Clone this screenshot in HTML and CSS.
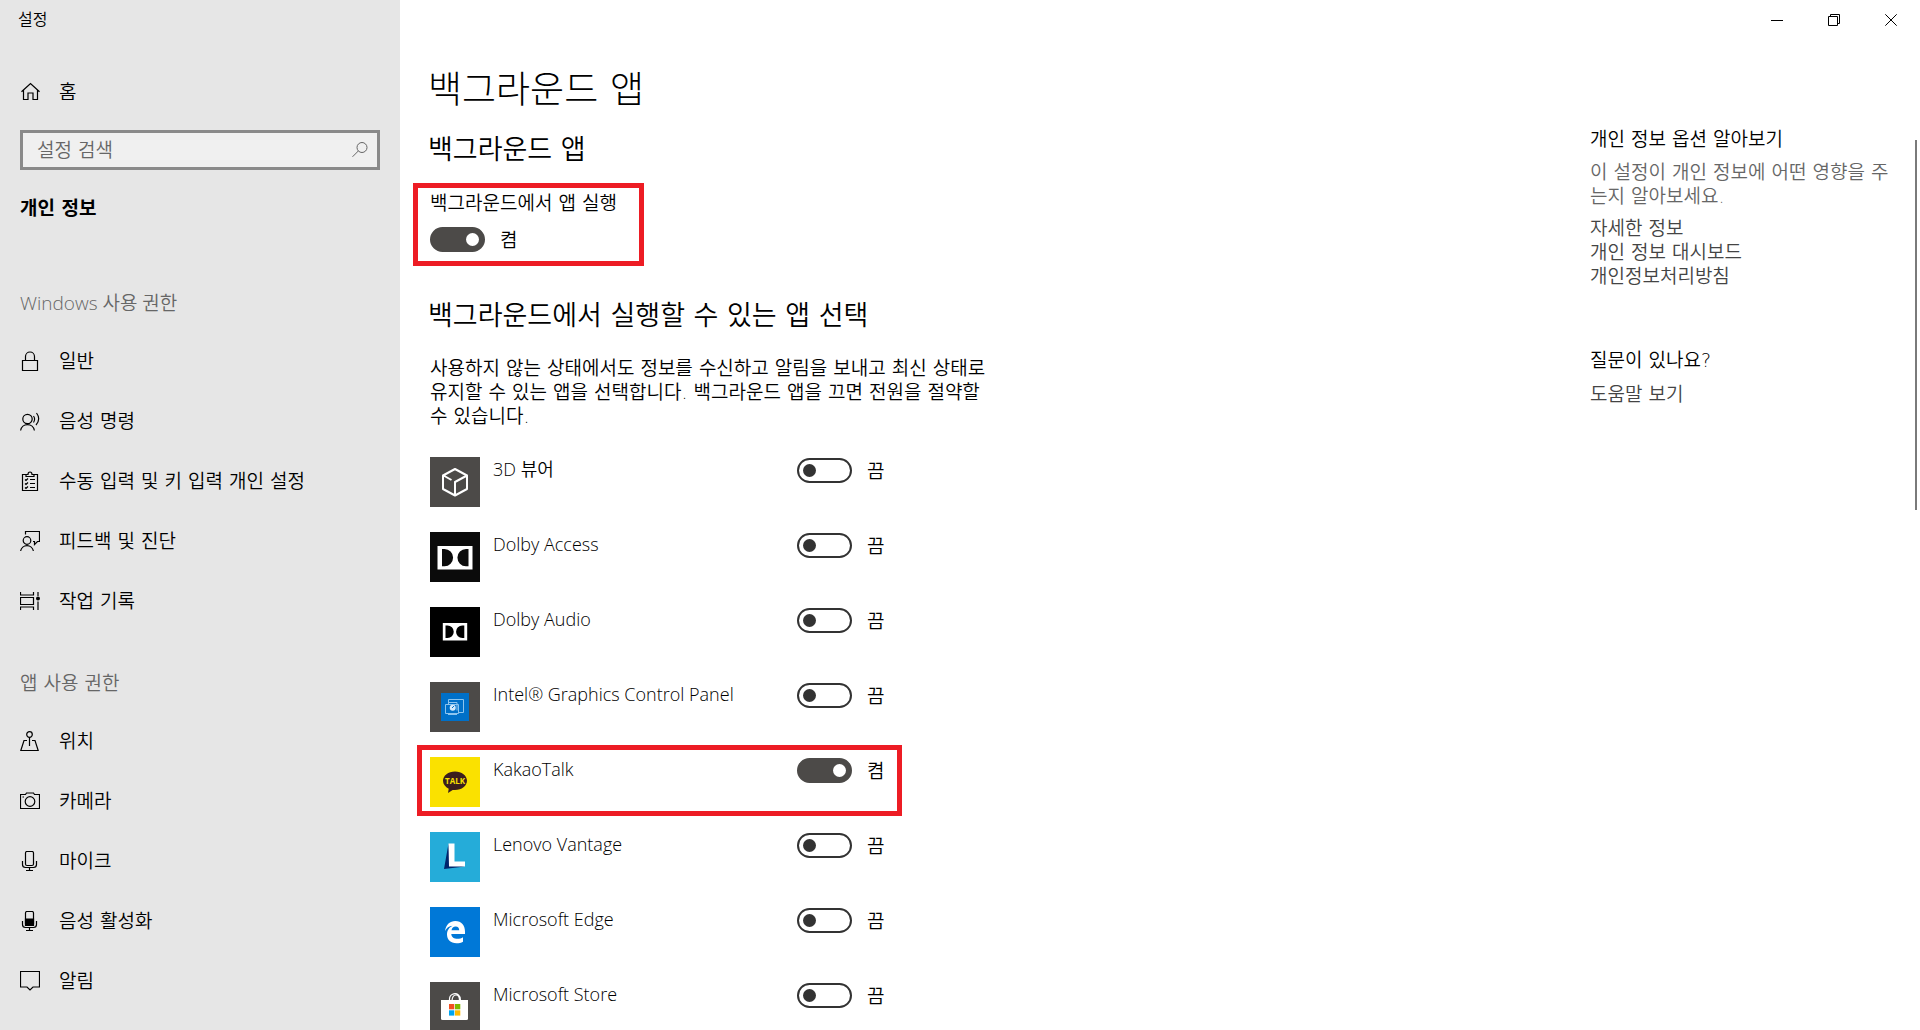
FILE: index.html
```html
<!DOCTYPE html>
<html lang="ko">
<head>
<meta charset="utf-8">
<meta name="viewport" content="width=device-width, initial-scale=1">
<title>설정</title>
<link rel="stylesheet" href="styles.css">
</head>
<body>
<div class="window">
  <aside class="sidebar">
    <div class="app-title">설정</div>
    <a class="nav-link home" href="#">
      <svg class="nav-icon" viewBox="0 0 20 20"><path d="M1.5 9.8 10.5 1.5l9 8.3M3.5 8.3v9.2h4.5v-6.5h5v6.5h4.500V8.300"/></svg>
      <span>홈</span>
    </a>
    <form class="search">
      <input class="search-input" type="text" placeholder="설정 검색" aria-label="설정 검색">
      <button class="search-button" type="button" aria-label="검색">
        <svg viewBox="0 0 18 18"><circle cx="11" cy="6.500" r="5"/><path d="M7.300 10 1.500 15.800"/></svg>
      </button>
    </form>
    <h2 class="category">개인 정보</h2>
    <nav>
      <h3 class="nav-heading latin">Windows 사용 권한</h3>
      <a class="nav-link" href="#">
        <svg class="nav-icon" viewBox="0 0 20 20"><path d="M2.500 9.500h15v10h-15zM5.500 9.500V5.500a4.500 4.500 0 0 1 9 0v4"/></svg>
        <span>일반</span>
      </a>
      <a class="nav-link" href="#">
        <svg class="nav-icon" viewBox="0 0 20 20"><circle cx="7.500" cy="8" r="4.700"/><path d="M.6 19.500a7 7 0 0 1 13.800 0M13.500 5q2.200 3 0 6.500M16.500 2q4.600 6-.5 12"/></svg>
        <span>음성 명령</span>
      </a>
      <a class="nav-link" href="#">
        <svg class="nav-icon" viewBox="0 0 20 20"><path d="M6 3.500H2.500v16h15v-16H14M6 5.500v-2h2q0-2.500 2-2.500t2 2.500h2v2zM10 8.500h5M10 12.500h5M10 16.500h5M5 8.500l1 1L8 7.500M5 12.500l1 1 2-2M5 16.500l1 1 2-2"/></svg>
        <span>수동 입력 및 키 입력 개인 설정</span>
      </a>
      <a class="nav-link" href="#">
        <svg class="nav-icon" viewBox="0 0 20 20"><circle cx="7" cy="9.500" r="3.800"/><path d="M.6 20a6.500 6.500 0 0 1 12.800 0M5.500 3.500v-3h14v10h-2l-3 3v-3h-1.500"/></svg>
        <span>피드백 및 진단</span>
      </a>
      <a class="nav-link" href="#">
        <svg class="nav-icon" viewBox="0 0 20 20"><path d="M.5 1v3h13V1M.5 6.500h13v7H.5zM.5 19v-3h13v3M18 1v4M18 10.500V19"/><circle class="solid dot" cx="18" cy="7.500" r="2"/></svg>
        <span>작업 기록</span>
      </a>
      <h3 class="nav-heading">앱 사용 권한</h3>
      <a class="nav-link" href="#">
        <svg class="nav-icon" viewBox="0 0 20 20"><circle cx="9.500" cy="3.500" r="2.800"/><path d="M9.500 6.300V15M7 9.500H4L.8 19.500h17.400L15 9.500h-3"/></svg>
        <span>위치</span>
      </a>
      <a class="nav-link" href="#">
        <svg class="nav-icon" viewBox="0 0 20 20"><path d="M.5 3.500h5l1-1.500h7l1 1.500h5v14H.5zM2.500 6h1.500"/><circle cx="10" cy="10.500" r="4.800"/></svg>
        <span>카메라</span>
      </a>
      <a class="nav-link" href="#">
        <svg class="nav-icon" viewBox="0 0 20 20"><rect x="5.500" y=".5" width="8" height="14" rx="1.500"/><path d="M2.500 10v3.500q0 3 3 3h8q3 0 3-3V10M9.500 16.500v3M6 19.500h7"/></svg>
        <span>마이크</span>
      </a>
      <a class="nav-link" href="#">
        <svg class="nav-icon" viewBox="0 0 20 20"><rect x="5.500" y=".5" width="8" height="14" rx="1.500"/><path class="solid" d="M5.500 8h8v6.500h-8z"/><path d="M2.500 10v3.500q0 3 3 3h8q3 0 3-3V10M9.500 16.500v3M6 19.500h7"/></svg>
        <span>음성 활성화</span>
      </a>
      <a class="nav-link" href="#">
        <svg class="nav-icon" viewBox="0 0 20 20"><path d="M.5.500h19v15.500h-6.500l-3 3-3-3H.5z"/></svg>
        <span>알림</span>
      </a>
    </nav>
  </aside>

  <div class="page">
    <header class="window-bar">
      <button class="window-button" type="button" aria-label="최소화"><svg viewBox="0 0 12 12"><path d="M0 6.500h12"/></svg></button>
      <button class="window-button" type="button" aria-label="이전 크기로 복원"><svg viewBox="0 0 12 12"><path d="M.5 2.500h9v9h-9zM2.500 2.500v-2h9v9h-2"/></svg></button>
      <button class="window-button" type="button" aria-label="닫기"><svg viewBox="0 0 12 12"><path d="M.3.300l11.400 11.400M11.700.300.300 11.700"/></svg></button>
    </header>
    <div class="columns">
      <main class="content">
        <h1>백그라운드 앱</h1>
        <h2 class="section-title">백그라운드 앱</h2>
        <section class="master marked">
          <label for="master">백그라운드에서 앱 실행</label>
          <div class="switch"><input id="master" type="checkbox" role="switch" checked><span>켬</span></div>
        </section>
        <h2 class="section-title choose">백그라운드에서 실행할 수 있는 앱 선택</h2>
        <p class="description">사용하지 않는 상태에서도 정보를 수신하고 알림을 보내고 최신 상태로 유지할 수 있는 앱을 선택합니다. 백그라운드 앱을 끄면 전원을 절약할 수 있습니다.</p>
        <ul class="apps">
          <li class="app">
            <svg class="app-icon" viewBox="0 0 50 50"><path fill="#4c4a48" d="M0 0h50v50H0z"/><path fill="none" stroke="#fff" stroke-width="2" stroke-linejoin="round" d="M25 12l12 6.500v13.500l-12 6.500-12-6.500V18.500zM13.500 18.500l8 4.500M37 18.500L25 25v13"/></svg>
            <label class="latin" for="a1">3D 뷰어</label>
            <div class="switch"><input id="a1" type="checkbox" role="switch"><span>끔</span></div>
          </li>
          <li class="app">
            <svg class="app-icon" viewBox="0 0 50 50"><path fill="#0b0b0b" d="M0 0h50v50H0z"/><path fill="#fff" d="M7.500 14h35v23.500h-35z"/><path fill="#0b0b0b" d="M12 17h2.500a8.600 8.600 0 0 1 0 17.200H12zM38.500 17H36a8.600 8.600 0 0 0 0 17.200h2.500z"/></svg>
            <label class="latin" for="a2">Dolby Access</label>
            <div class="switch"><input id="a2" type="checkbox" role="switch"><span>끔</span></div>
          </li>
          <li class="app">
            <svg class="app-icon" viewBox="0 0 50 50"><path d="M0 0h50v50H0z"/><path fill="#fff" d="M12.800 16h24.400v17.500H12.800z"/><path d="M15.500 18.500h2a6.200 6.200 0 0 1 0 12.500h-2zM34.300 18.500h-2a6.200 6.200 0 0 0 0 12.500h2z"/></svg>
            <label class="latin" for="a3">Dolby Audio</label>
            <div class="switch"><input id="a3" type="checkbox" role="switch"><span>끔</span></div>
          </li>
          <li class="app">
            <svg class="app-icon" viewBox="0 0 50 50"><path fill="#4c4a48" d="M0 0h50v50H0z"/><path fill="#0070c8" d="M11 11h28v28H11z"/><path fill="none" stroke="#8cc4ee" d="M18.500 22v-4.500h15v13h-5M15.500 22.500h13v9h-13zM18 32.500h9M19 20.500h8v8"/><circle cx="22.700" cy="25.700" r="3" fill="#d5ebfb"/><path stroke="#0070c8" d="M22 26l2-2"/></svg>
            <label class="latin" for="a4">Intel® Graphics Control Panel</label>
            <div class="switch"><input id="a4" type="checkbox" role="switch"><span>끔</span></div>
          </li>
          <li class="app marked">
            <svg class="app-icon" viewBox="0 0 50 50"><path fill="#fae100" d="M0 0h50v50H0z"/><path fill="#3b1e1e" d="M25 14.500c6.700 0 12 4.200 12 9.300s-5.300 9.300-12 9.300l-2.300-.1-4.700 3 .7-4.300c-3.400-1.700-5.700-4.600-5.700-7.900 0-5.100 5.300-9.300 12-9.300z"/><text class="talk" x="25" y="27" text-anchor="middle">TALK</text></svg>
            <label class="latin" for="a5">KakaoTalk</label>
            <div class="switch"><input id="a5" type="checkbox" role="switch" checked><span>켬</span></div>
          </li>
          <li class="app">
            <svg class="app-icon" viewBox="0 0 50 50"><path fill="#25acd9" d="M0 0h50v50H0z"/><path fill="#00246b" d="M18.500 11.500L14 37l21-2.500-15-2z"/><path fill="#fff" d="M18.500 11.500h6V29.500h10.500v5h-16z"/></svg>
            <label class="latin" for="a6">Lenovo Vantage</label>
            <div class="switch"><input id="a6" type="checkbox" role="switch"><span>끔</span></div>
          </li>
          <li class="app">
            <svg class="app-icon" viewBox="0 0 50 50"><path fill="#0078d7" d="M0 0h50v50H0z"/><path fill="#fff" d="M15 24C16 17.500 20 14 25.300 14 31.500 14 35 18.500 35 24.500V27H21.300c.2 3.300 3 4.800 6 4.800 2.300 0 4.200-.7 5.700-1.600v4.500c-1.800 1-4 1.500-6.500 1.500-6 0-9.500-3.500-9.500-8.700 0-4 2.300-7.200 5.500-8.700-3.500.3-6 2.200-7.500 5.200zm6.500-.7h7.700c0-2.500-1.200-3.900-3.500-3.900s-3.900 1.600-4.200 3.900z"/></svg>
            <label class="latin" for="a7">Microsoft Edge</label>
            <div class="switch"><input id="a7" type="checkbox" role="switch"><span>끔</span></div>
          </li>
          <li class="app">
            <svg class="app-icon" viewBox="0 0 50 50"><path fill="#4c4a48" d="M0 0h50v50H0z"/><path fill="none" stroke="#fff" stroke-width="1.200" d="M19.500 18.500v-1a5.500 5.500 0 0 1 9-4.500q2 1.500 2 5.500M22 18.500q.5-5.500 4-5.500t3.500 5.500"/><path fill="#fff" d="M11 18h27v18.500q0 1.500-1.500 1.500h-24q-1.500 0-1.500-1.500z"/><path fill="#f25022" d="M19 22h5.300v5.300H19z"/><path fill="#7fba00" d="M25 22h5.300v5.300H25z"/><path fill="#00a4ef" d="M19 28.300h5.300v5.300H19z"/><path fill="#ffb900" d="M25 28.300h5.300v5.300H25z"/></svg>
            <label class="latin" for="a8">Microsoft Store</label>
            <div class="switch"><input id="a8" type="checkbox" role="switch"><span>끔</span></div>
          </li>
        </ul>
      </main>
      <aside class="related">
        <h3>개인 정보 옵션 알아보기</h3>
        <p>이 설정이 개인 정보에 어떤 영향을 주는지 알아보세요.</p>
        <a href="#">자세한 정보</a>
        <a href="#">개인 정보 대시보드</a>
        <a href="#">개인정보처리방침</a>
        <h3 class="question">질문이 있나요?</h3>
        <a href="#">도움말 보기</a>
      </aside>
    </div>
    <div class="scroll-thumb"></div>
  </div>
</div>
</body>
</html>
```

FILE: styles.css
```css
* { box-sizing: border-box; }

body {
  margin: 0;
  background: #fff;
  color: #000;
  font: 350 19px/24px "DejaVu Sans", "Noto Sans CJK KR", sans-serif;
}

h1, h2, h3, p, ul { margin: 0; padding: 0; font-weight: inherit; }
a { color: inherit; text-decoration: none; }
button { padding: 0; border: 0; background: none; }

.window {
  display: grid;
  grid-template-columns: 400px minmax(0, 1fr);
  height: 100vh;
  overflow: hidden;
}

/* Sidebar */
.sidebar { background: #e6e6e6; overflow: hidden; }
.app-title { height: 40px; padding-left: 18px; font-size: 16px; line-height: 40px; }

.nav-link {
  display: flex;
  align-items: center;
  gap: 19px;
  height: 60px;
  padding-left: 20px;
}
.home { margin-top: 22px; margin-bottom: 8px; }
.nav-icon { flex: none; width: 20px; height: 20px; fill: none; stroke: #000; stroke-width: 1.2; }
.nav-icon .solid { fill: #000; }
.nav-icon .dot { stroke: none; }

.search {
  display: flex;
  height: 40px;
  margin: 0 20px;
  border: 3px solid #8a8a8a;
  background: #f0f0f0;
}
.search-input {
  flex: 1;
  min-width: 0;
  padding: 0 0 0 14px;
  border: 0;
  outline: 0;
  background: none;
  font: inherit;
}
.search-input::placeholder { color: #666; opacity: 1; }
.search-button { width: 34px; }
.search-button svg { display: block; width: 18px; height: 18px; margin: auto; fill: none; stroke: #666; }

.category { margin: 26px 20px 0; font-size: 19px; font-weight: 700; }
.nav-heading { padding-left: 20px; color: #666; font-size: 19px; }
nav .nav-heading { margin-top: 71px; margin-bottom: 16px; }
nav .nav-link + .nav-heading { margin-top: 40px; }

/* Page */
.page { position: relative; overflow: hidden; }
.window-bar { display: flex; justify-content: flex-end; height: 40px; padding-right: 1px; }
.window-button { width: 57px; height: 40px; }
.window-button svg { display: block; width: 12px; height: 12px; margin: auto; fill: none; stroke: #000; }

.columns { display: flex; justify-content: space-between; padding: 0 20px 0 30px; }
.content { flex: 0 1 562px; padding-top: 27px; }
h1, .section-title { margin-left: -2px; }
h1 { font-size: 37px; line-height: 48px; font-weight: 300; }
.section-title { margin-top: 17px; font-size: 27px; line-height: 36px; }
.choose { margin-top: 32px; }
.description { margin-top: 22px; word-break: keep-all; }
.latin { font-family: "Open Sans", "Noto Sans CJK KR", sans-serif; }

.marked { border: 5px solid #ed1c24; }
.master { width: 231px; margin: 15px 0 0 -17px; padding: 3px 12px 9px; }
.master label { display: block; margin-bottom: 12px; white-space: nowrap; }

.switch { display: flex; align-items: center; gap: 15px; height: 25px; }
.switch input {
  appearance: none;
  display: flex;
  align-items: center;
  width: 55px;
  height: 25px;
  margin: 0;
  padding: 0 4px;
  border: 2px solid #333;
  border-radius: 13px;
}
.switch input::before { content: ""; width: 13px; height: 13px; border-radius: 50%; background: #333; }
.switch input:checked { justify-content: flex-end; border-color: #4c4a48; background: #4c4a48; }
.switch input:checked::before { background: #fff; }

.apps { display: flex; flex-direction: column; width: 459px; margin-top: 29px; list-style: none; }
.app { display: grid; grid-template-columns: 50px 1fr 92px; column-gap: 13px; margin-bottom: 25px; }
.app.marked { margin: -12px -13px 16px; padding: 7px 8px 4px; }
.app-icon { display: block; width: 50px; height: 50px; }
.app label { font-size: 18px; }
.app .switch { margin-top: 1px; }
.talk { fill: #fae100; font: 700 8px "Open Sans", sans-serif; }

.related { flex: 0 0 310px; padding-top: 87px; }
.related h3 { font-size: 19px; }
.related p { margin: 9px 0 8px; color: #666; }
.related a { display: block; color: #444; }
.related .question { margin: 60px 0 10px; }

.scroll-thumb {
  position: absolute;
  top: 140px;
  right: 3px;
  width: 2px;
  height: 370px;
  background: #7a7a7a;
}
```
